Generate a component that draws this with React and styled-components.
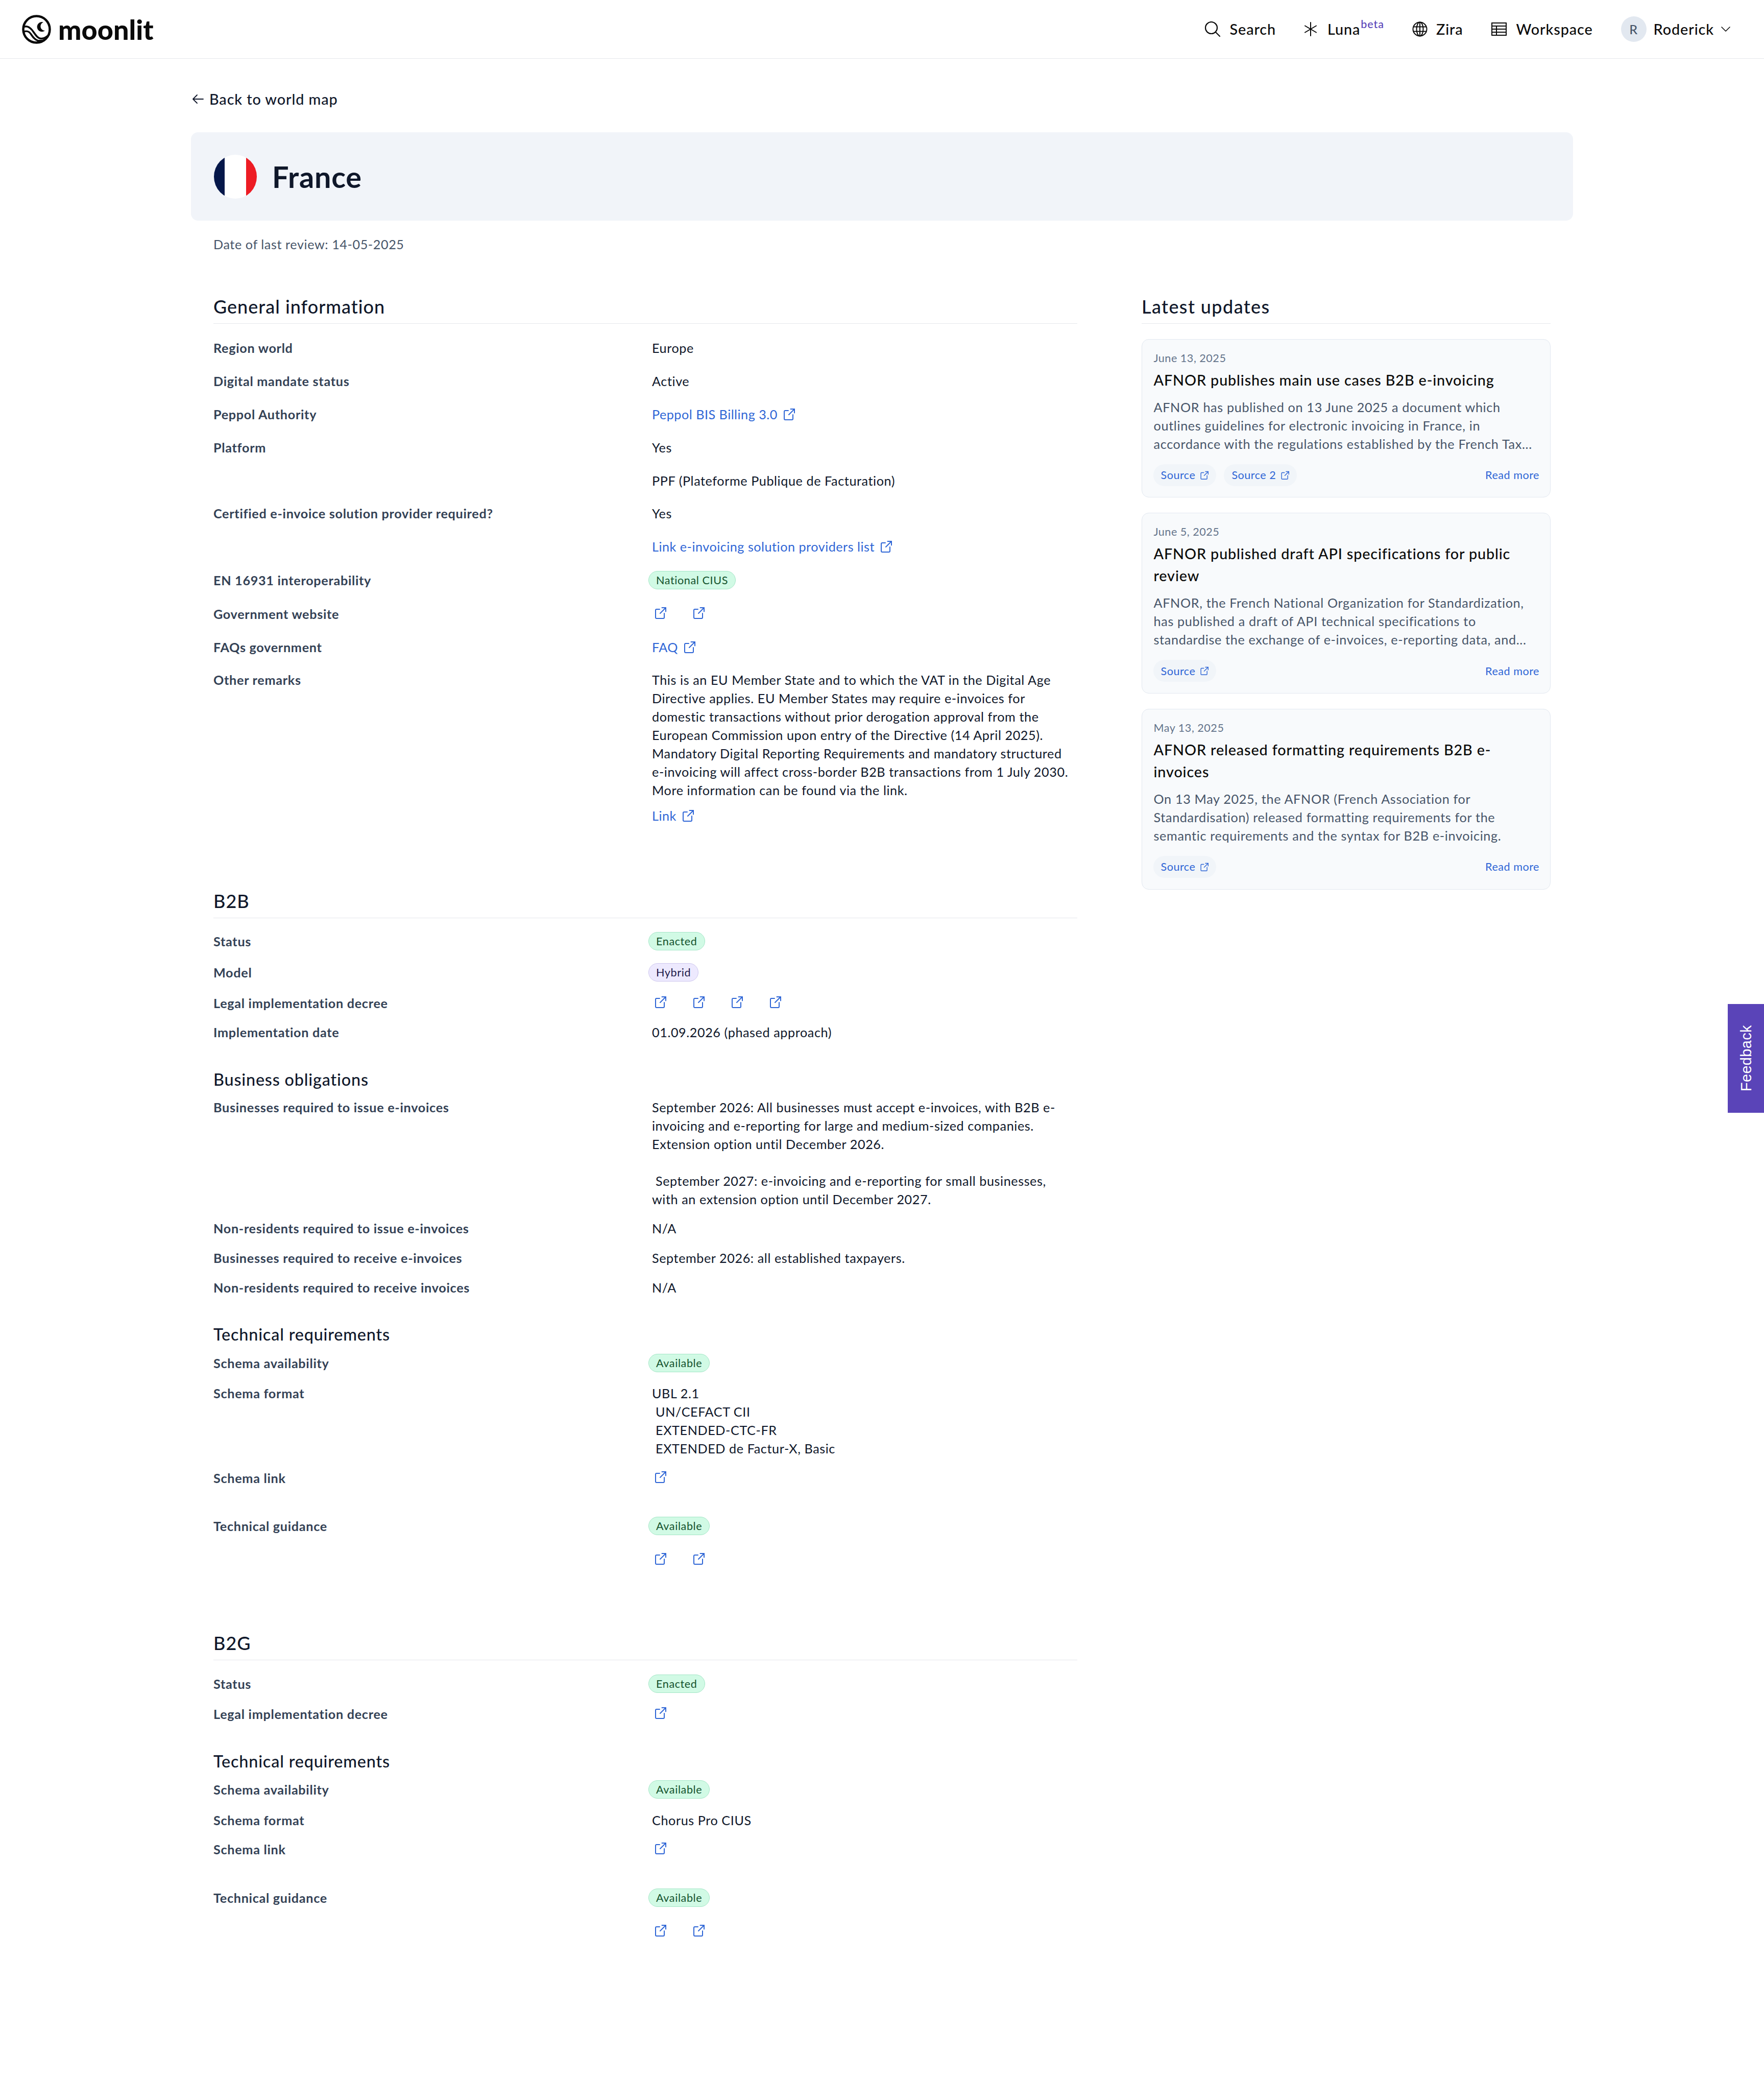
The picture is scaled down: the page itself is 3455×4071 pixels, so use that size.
import React from 'react';
import styled, { createGlobalStyle } from 'styled-components';

const GlobalStyle = createGlobalStyle`
  * { box-sizing: border-box; }
  html, body { margin: 0; padding: 0; background: #fff; }
  body {
    font-family: "Lato", "Open Sans", sans-serif;
    font-size: 25.2px;
    line-height: 36px;
    color: #0f172a;
    letter-spacing: 0.58px;
  }
`;

const TopBar = styled.header`
  height: 115px;
  border-bottom: 1px solid #e5e7eb;
  display: flex;
  align-items: center;
  justify-content: space-between;
  padding: 0 66px 0 43px;
`;

const Brand = styled.div`
  display: flex;
  align-items: center;
  gap: 14px;
  font-size: 54px;
  font-weight: 900;
  letter-spacing: 0;
  color: #0a0a0a;
  line-height: 57px;
`;

const Nav = styled.nav`
  display: flex;
  align-items: center;
  gap: 55px;
  color: #0a0a0a;
  font-size: 28.8px;
  font-weight: 500;
  letter-spacing: 0.9px;
`;

const NavItem = styled.div`
  display: flex;
  align-items: center;
  gap: ${(p) => p.$gap || 17}px;
  svg { flex: none; }
`;

const LunaLabel = styled.span`
  display: inline-flex;
  align-items: center;
`;

const Beta = styled.span`
  font-size: 21.6px;
  line-height: 1;
  color: #5a44b8;
  margin-left: 1px;
  position: relative;
  top: -9px;
`;

const Avatar = styled.span`
  width: 50px;
  height: 50px;
  border-radius: 50%;
  background: #e2e8f0;
  color: #475569;
  font-size: 25.2px;
  display: flex;
  align-items: center;
  justify-content: center;
`;

const Main = styled.main`
  width: 2707px;
  margin: 0 auto;
  padding-top: 61px;
`;

const BackLink = styled.div`
  display: flex;
  align-items: center;
  gap: 11px;
  height: 36px;
  padding-left: 3px;
  margin-bottom: 47px;
  font-size: 28.8px;
  font-weight: 500;
  letter-spacing: 0.9px;
`;

const Banner = styled.div`
  height: 173px;
  background: #f1f4f9;
  border-radius: 14px;
  padding: 0 45px;
  display: flex;
  align-items: center;
  gap: 30px;
`;

const CountryName = styled.h1`
  margin: 0;
  font-size: 57.6px;
  font-weight: 700;
  line-height: 72px;
  letter-spacing: 0.8px;
`;

const ReviewDate = styled.p`
  margin: 28px 0 79px 44px;
  color: #475569;
`;

const Columns = styled.div`
  display: grid;
  grid-template-columns: 1692px 801px;
  justify-content: space-between;
  padding: 0 44px;
`;

const SectionTitle = styled.h2`
  margin: 0;
  font-size: 36px;
  font-weight: 500;
  line-height: 50px;
  padding-bottom: 8px;
  border-bottom: 1px solid #e5e7eb;
  letter-spacing: 1px;
`;

const AsideTitle = styled(SectionTitle)`
  letter-spacing: 1.4px;
`;

const Section = styled.section`
  margin-bottom: 109px;
`;

const SubTitle = styled.h3`
  margin: 42px 0 4px;
  font-size: 32.4px;
  font-weight: 500;
  line-height: 43px;
  letter-spacing: 0.8px;
`;

const Rows = styled.div`
  margin-top: 15px;
`;

const Row = styled.div`
  display: grid;
  grid-template-columns: 859px 1fr;
  padding: ${(p) => p.$pad || 10.8}px 0;
`;

const Label = styled.div`
  font-weight: 700;
  color: #334155;
  letter-spacing: 0.7px;
`;

const Value = styled.div`
  color: #0f172a;
  white-space: nowrap;
`;

const Anchor = styled.span`
  display: inline-flex;
  align-items: center;
  vertical-align: top;
  gap: 10px;
  color: #2f66d6;
  letter-spacing: 0.5px;
`;

const Badge = styled.span`
  display: inline-block;
  vertical-align: top;
  height: 36px;
  margin-left: -7px;
  padding: 0 14px;
  border-radius: 18px;
  font-size: 21.6px;
  line-height: 34px;
  border: 1px solid ${(p) => (p.$tone === 'violet' ? '#cdc6ee' : '#a3e6c6')};
  background: ${(p) => (p.$tone === 'violet' ? '#ede9fe' : '#d1fae5')};
  color: ${(p) => (p.$tone === 'violet' ? '#1e1b4b' : '#14532d')};
`;

const IconLinks = styled.div`
  display: flex;
  gap: 51px;
  height: 36px;
  padding: 4px 0 0 4px;
  color: #2f66d6;
`;

const GuidanceLinks = styled(IconLinks)`
  margin-top: 30px;
`;

const Gap = styled.div`
  height: ${(p) => p.$h}px;
`;

const Cards = styled.div`
  margin-top: 30px;
  display: flex;
  flex-direction: column;
  gap: 30px;
`;

const Card = styled.article`
  background: #f8fafc;
  border: 1px solid #e2e8f0;
  border-radius: 14px;
  padding: 21.6px 21px 21.6px 22.5px;
`;

const CardDate = styled.div`
  font-size: 21.6px;
  line-height: 28.8px;
  color: #64748b;
  margin-bottom: 7.2px;
  letter-spacing: 0.5px;
`;

const CardTitle = styled.h4`
  margin: 0 0 13px;
  font-size: 28.8px;
  line-height: 43.2px;
  font-weight: 500;
  color: #0a0a0a;
  letter-spacing: 0.85px;
`;

const CardText = styled.p`
  margin: 0 0 22px;
  color: #475569;
  white-space: nowrap;
  letter-spacing: 0.66px;
`;

const CardFooter = styled.div`
  display: flex;
  align-items: center;
  gap: 15px;
  margin-left: -1px;
  font-size: 21.6px;
  color: #2f66d6;
  letter-spacing: 0.5px;
`;

const Pill = styled.span`
  display: inline-flex;
  align-items: center;
  gap: 9px;
  height: 43px;
  padding: 0 15px;
  border-radius: 22px;
  background: #f1f5f9;
`;

const ReadMore = styled.span`
  margin-left: auto;
`;

const FeedbackTab = styled.div`
  position: absolute;
  top: 1966px;
  right: 0;
  width: 71px;
  height: 213px;
  background: #5a44b8;
  color: #fff;
  display: flex;
  align-items: center;
  justify-content: center;
  writing-mode: vertical-rl;
  transform: rotate(180deg);
  font-family: "Liberation Sans", sans-serif;
  font-size: 29px;
  letter-spacing: 0.3px;
`;

const Ext = ({ size = 24 }) => (
  <svg width={size} height={size} viewBox="0 0 24 24" fill="none" stroke="currentColor" strokeWidth="2" strokeLinecap="round" strokeLinejoin="round">
    <path d="M11 5H5a2 2 0 0 0-2 2v14a2 2 0 0 0 2 2h13a2 2 0 0 0 2-2v-8" />
    <path d="M12 13L23 2" />
    <path d="M15.5 2H23v7.5" />
  </svg>
);

const Logo = () => (
  <svg width="57" height="57" viewBox="0 0 57 57" fill="none" stroke="#0a0a0a">
    <circle cx="28.5" cy="28.5" r="26" strokeWidth="4.5" />
    <path d="M2 25C8 20 15 24 20 30C26 38 30 46 37 46.5C43 47 49 43 54 38" strokeWidth="3.5" />
    <path d="M4 33C9 31 14 33 17 37C21 43 25 49 31 50.5C35 51 39 51 44 50" strokeWidth="3.5" />
    <path d="M42 14.5A9.5 9.5 0 1 0 45 31A8.5 8.5 0 0 1 42 14.5Z" fill="#0a0a0a" stroke="none" />
  </svg>
);

const Flag = () => (
  <svg width="84" height="86" viewBox="0 0 84 86">
    <defs>
      <clipPath id="flag-clip">
        <ellipse cx="42" cy="43" rx="42" ry="43" />
      </clipPath>
    </defs>
    <g clipPath="url(#flag-clip)">
      <rect x="0" y="0" width="21" height="86" fill="#05174a" />
      <rect x="21" y="0" width="42" height="86" fill="#fff" />
      <rect x="63" y="0" width="21" height="86" fill="#ed1c24" />
    </g>
  </svg>
);

const SearchIcon = () => (
  <svg width="32" height="30" viewBox="0 0 32 30" fill="none" stroke="#0a0a0a" strokeWidth="2.2" strokeLinecap="round">
    <circle cx="13.5" cy="12.5" r="11.5" />
    <path d="M22 21L30 29" />
  </svg>
);

const StarIcon = () => (
  <svg width="26" height="28" viewBox="0 0 26 28" fill="none" stroke="#0a0a0a" strokeWidth="2" strokeLinecap="round">
    <path d="M13 1v26M2 7.5l22 13M2 20.5l22-13" />
  </svg>
);

const GlobeIcon = () => (
  <svg width="30" height="30" viewBox="0 0 30 30" fill="none" stroke="#0a0a0a" strokeWidth="2">
    <circle cx="15" cy="15" r="13.5" />
    <ellipse cx="15" cy="15" rx="6.5" ry="13.5" />
    <path d="M15 1.5v27M2.5 10.5h25M2.5 19.5h25" />
  </svg>
);

const TableIcon = () => (
  <svg width="30" height="26" viewBox="0 0 30 26" fill="none" stroke="#0a0a0a" strokeWidth="2">
    <rect x="1" y="1" width="28" height="24" />
    <path d="M1 7h28M1 13h28M1 19h28M10 7v18" />
  </svg>
);

const ChevronIcon = () => (
  <svg width="18" height="10" viewBox="0 0 18 10" fill="none" stroke="#0a0a0a" strokeWidth="1.6" strokeLinecap="round" strokeLinejoin="round">
    <path d="M1 1l8 8 8-8" />
  </svg>
);

const BackArrow = () => (
  <svg width="22" height="20" viewBox="0 0 22 20" fill="none" stroke="#0f172a" strokeWidth="1.8" strokeLinecap="round" strokeLinejoin="round">
    <path d="M21 10H1M9 2l-8 8 8 8" />
  </svg>
);

const Links = ({ count, as: Comp = IconLinks }) => (
  <Comp>
    {Array.from({ length: count }).map((_, i) => (
      <Ext key={i} />
    ))}
  </Comp>
);

const Source = ({ children }) => (
  <Pill>
    {children}
    <Ext size={17} />
  </Pill>
);

const updates = [
  {
    date: 'June 13, 2025',
    title: ['AFNOR publishes main use cases B2B e-invoicing'],
    text: [
      'AFNOR has published on 13 June 2025 a document which',
      'outlines guidelines for electronic invoicing in France, in',
      'accordance with the regulations established by the French Tax...',
    ],
    sources: ['Source', 'Source 2'],
  },
  {
    date: 'June 5, 2025',
    title: ['AFNOR published draft API specifications for public', 'review'],
    text: [
      'AFNOR, the French National Organization for Standardization,',
      'has published a draft of API technical specifications to',
      'standardise the exchange of e-invoices, e-reporting data, and...',
    ],
    sources: ['Source'],
  },
  {
    date: 'May 13, 2025',
    title: ['AFNOR released formatting requirements B2B e-', 'invoices'],
    text: [
      'On 13 May 2025, the AFNOR (French Association for',
      'Standardisation) released formatting requirements for the',
      'semantic requirements and the syntax for B2B e-invoicing.',
    ],
    sources: ['Source'],
  },
];

const Lines = ({ items }) =>
  items.map((line, i) => (
    <React.Fragment key={i}>
      {i > 0 && <br />}
      {line}
    </React.Fragment>
  ));

const Requirements = ({ format }) => (
  <>
    <SubTitle>Technical requirements</SubTitle>
    <Row $pad={12.5}>
      <Label>Schema availability</Label>
      <Value><Badge>Available</Badge></Value>
    </Row>
    <Row>
      <Label>Schema format</Label>
      <Value><Lines items={format} /></Value>
    </Row>
    <Row>
      <Label>Schema link</Label>
      <Value><Links count={1} /></Value>
    </Row>
    <Gap $h={37} />
    <Row>
      <Label>Technical guidance</Label>
      <Value>
        <Badge>Available</Badge>
        <Links count={2} as={GuidanceLinks} />
      </Value>
    </Row>
  </>
);

export default function App() {
  return (
    <>
      <GlobalStyle />
      <TopBar>
        <Brand>
          <Logo />
          moonlit
        </Brand>
        <Nav>
          <NavItem>
            <SearchIcon />
            Search
          </NavItem>
          <NavItem $gap={20}>
            <StarIcon />
            <LunaLabel>
              Luna
              <Beta>beta</Beta>
            </LunaLabel>
          </NavItem>
          <NavItem>
            <GlobeIcon />
            Zira
          </NavItem>
          <NavItem $gap={19}>
            <TableIcon />
            Workspace
          </NavItem>
          <NavItem $gap={14}>
            <Avatar>R</Avatar>
            Roderick
            <ChevronIcon />
          </NavItem>
        </Nav>
      </TopBar>
      <FeedbackTab>Feedback</FeedbackTab>
      <Main>
        <BackLink>
          <BackArrow />
          Back to world map
        </BackLink>
        <Banner>
          <Flag />
          <CountryName>France</CountryName>
        </Banner>
        <ReviewDate>Date of last review: 14-05-2025</ReviewDate>
        <Columns>
          <div>
            <Section>
              <SectionTitle>General information</SectionTitle>
              <Rows>
                <Row $pad={14.4}><Label>Region world</Label><Value>Europe</Value></Row>
                <Row $pad={14.4}><Label>Digital mandate status</Label><Value>Active</Value></Row>
                <Row $pad={14.4}><Label>Peppol Authority</Label><Value><Anchor>Peppol BIS Billing 3.0 <Ext /></Anchor></Value></Row>
                <Row $pad={14.4}><Label>Platform</Label><Value>Yes</Value></Row>
                <Row $pad={14.4}><Label /><Value>PPF (Plateforme Publique de Facturation)</Value></Row>
                <Row $pad={14.4}><Label>Certified e-invoice solution provider required?</Label><Value>Yes</Value></Row>
                <Row $pad={14.4}><Label /><Value><Anchor>Link e-invoicing solution providers list <Ext /></Anchor></Value></Row>
                <Row $pad={15.5}><Label>EN 16931 interoperability</Label><Value><Badge>National CIUS</Badge></Value></Row>
                <Row $pad={14.4}><Label>Government website</Label><Value><Links count={2} /></Value></Row>
                <Row $pad={14.4}><Label>FAQs government</Label><Value><Anchor>FAQ <Ext /></Anchor></Value></Row>
                <Row $pad={14.4}>
                  <Label>Other remarks</Label>
                  <Value>
                    <Lines items={[
                      'This is an EU Member State and to which the VAT in the Digital Age',
                      'Directive applies. EU Member States may require e-invoices for',
                      'domestic transactions without prior derogation approval from the',
                      'European Commission upon entry of the Directive (14 April 2025).',
                      'Mandatory Digital Reporting Requirements and mandatory structured',
                      'e-invoicing will affect cross-border B2B transactions from 1 July 2030.',
                      'More information can be found via the link.',
                    ]} />
                    <Gap $h={14} />
                    <Anchor>Link <Ext /></Anchor>
                  </Value>
                </Row>
              </Rows>
            </Section>

            <Section>
              <SectionTitle>B2B</SectionTitle>
              <Rows>
                <Row $pad={12.5}><Label>Status</Label><Value><Badge>Enacted</Badge></Value></Row>
                <Row $pad={12.5}><Label>Model</Label><Value><Badge $tone="violet">Hybrid</Badge></Value></Row>
                <Row><Label>Legal implementation decree</Label><Value><Links count={4} /></Value></Row>
                <Row><Label>Implementation date</Label><Value>01.09.2026 (phased approach)</Value></Row>
              </Rows>
              <SubTitle>Business obligations</SubTitle>
              <Row>
                <Label>Businesses required to issue e-invoices</Label>
                <Value>
                  <Lines items={[
                    'September 2026: All businesses must accept e-invoices, with B2B e-',
                    'invoicing and e-reporting for large and medium-sized companies.',
                    'Extension option until December 2026.',
                    '\u00a0',
                    '\u00a0September 2027: e-invoicing and e-reporting for small businesses,',
                    'with an extension option until December 2027.',
                  ]} />
                </Value>
              </Row>
              <Row><Label>Non-residents required to issue e-invoices</Label><Value>N/A</Value></Row>
              <Row><Label>Businesses required to receive e-invoices</Label><Value>September 2026: all established taxpayers.</Value></Row>
              <Row><Label>Non-residents required to receive invoices</Label><Value>N/A</Value></Row>
              <Requirements format={['UBL 2.1', '\u00a0UN/CEFACT CII', '\u00a0EXTENDED-CTC-FR', '\u00a0EXTENDED de Factur-X, Basic']} />
            </Section>

            <Section>
              <SectionTitle>B2G</SectionTitle>
              <Rows>
                <Row $pad={12.5}><Label>Status</Label><Value><Badge>Enacted</Badge></Value></Row>
                <Row><Label>Legal implementation decree</Label><Value><Links count={1} /></Value></Row>
              </Rows>
              <Requirements format={['Chorus Pro CIUS']} />
            </Section>
          </div>

          <aside>
            <AsideTitle>Latest updates</AsideTitle>
            <Cards>
              {updates.map((u) => (
                <Card key={u.date}>
                  <CardDate>{u.date}</CardDate>
                  <CardTitle><Lines items={u.title} /></CardTitle>
                  <CardText><Lines items={u.text} /></CardText>
                  <CardFooter>
                    {u.sources.map((s) => (
                      <Source key={s}>{s}</Source>
                    ))}
                    <ReadMore>Read more</ReadMore>
                  </CardFooter>
                </Card>
              ))}
            </Cards>
          </aside>
        </Columns>
      </Main>
    </>
  );
}
